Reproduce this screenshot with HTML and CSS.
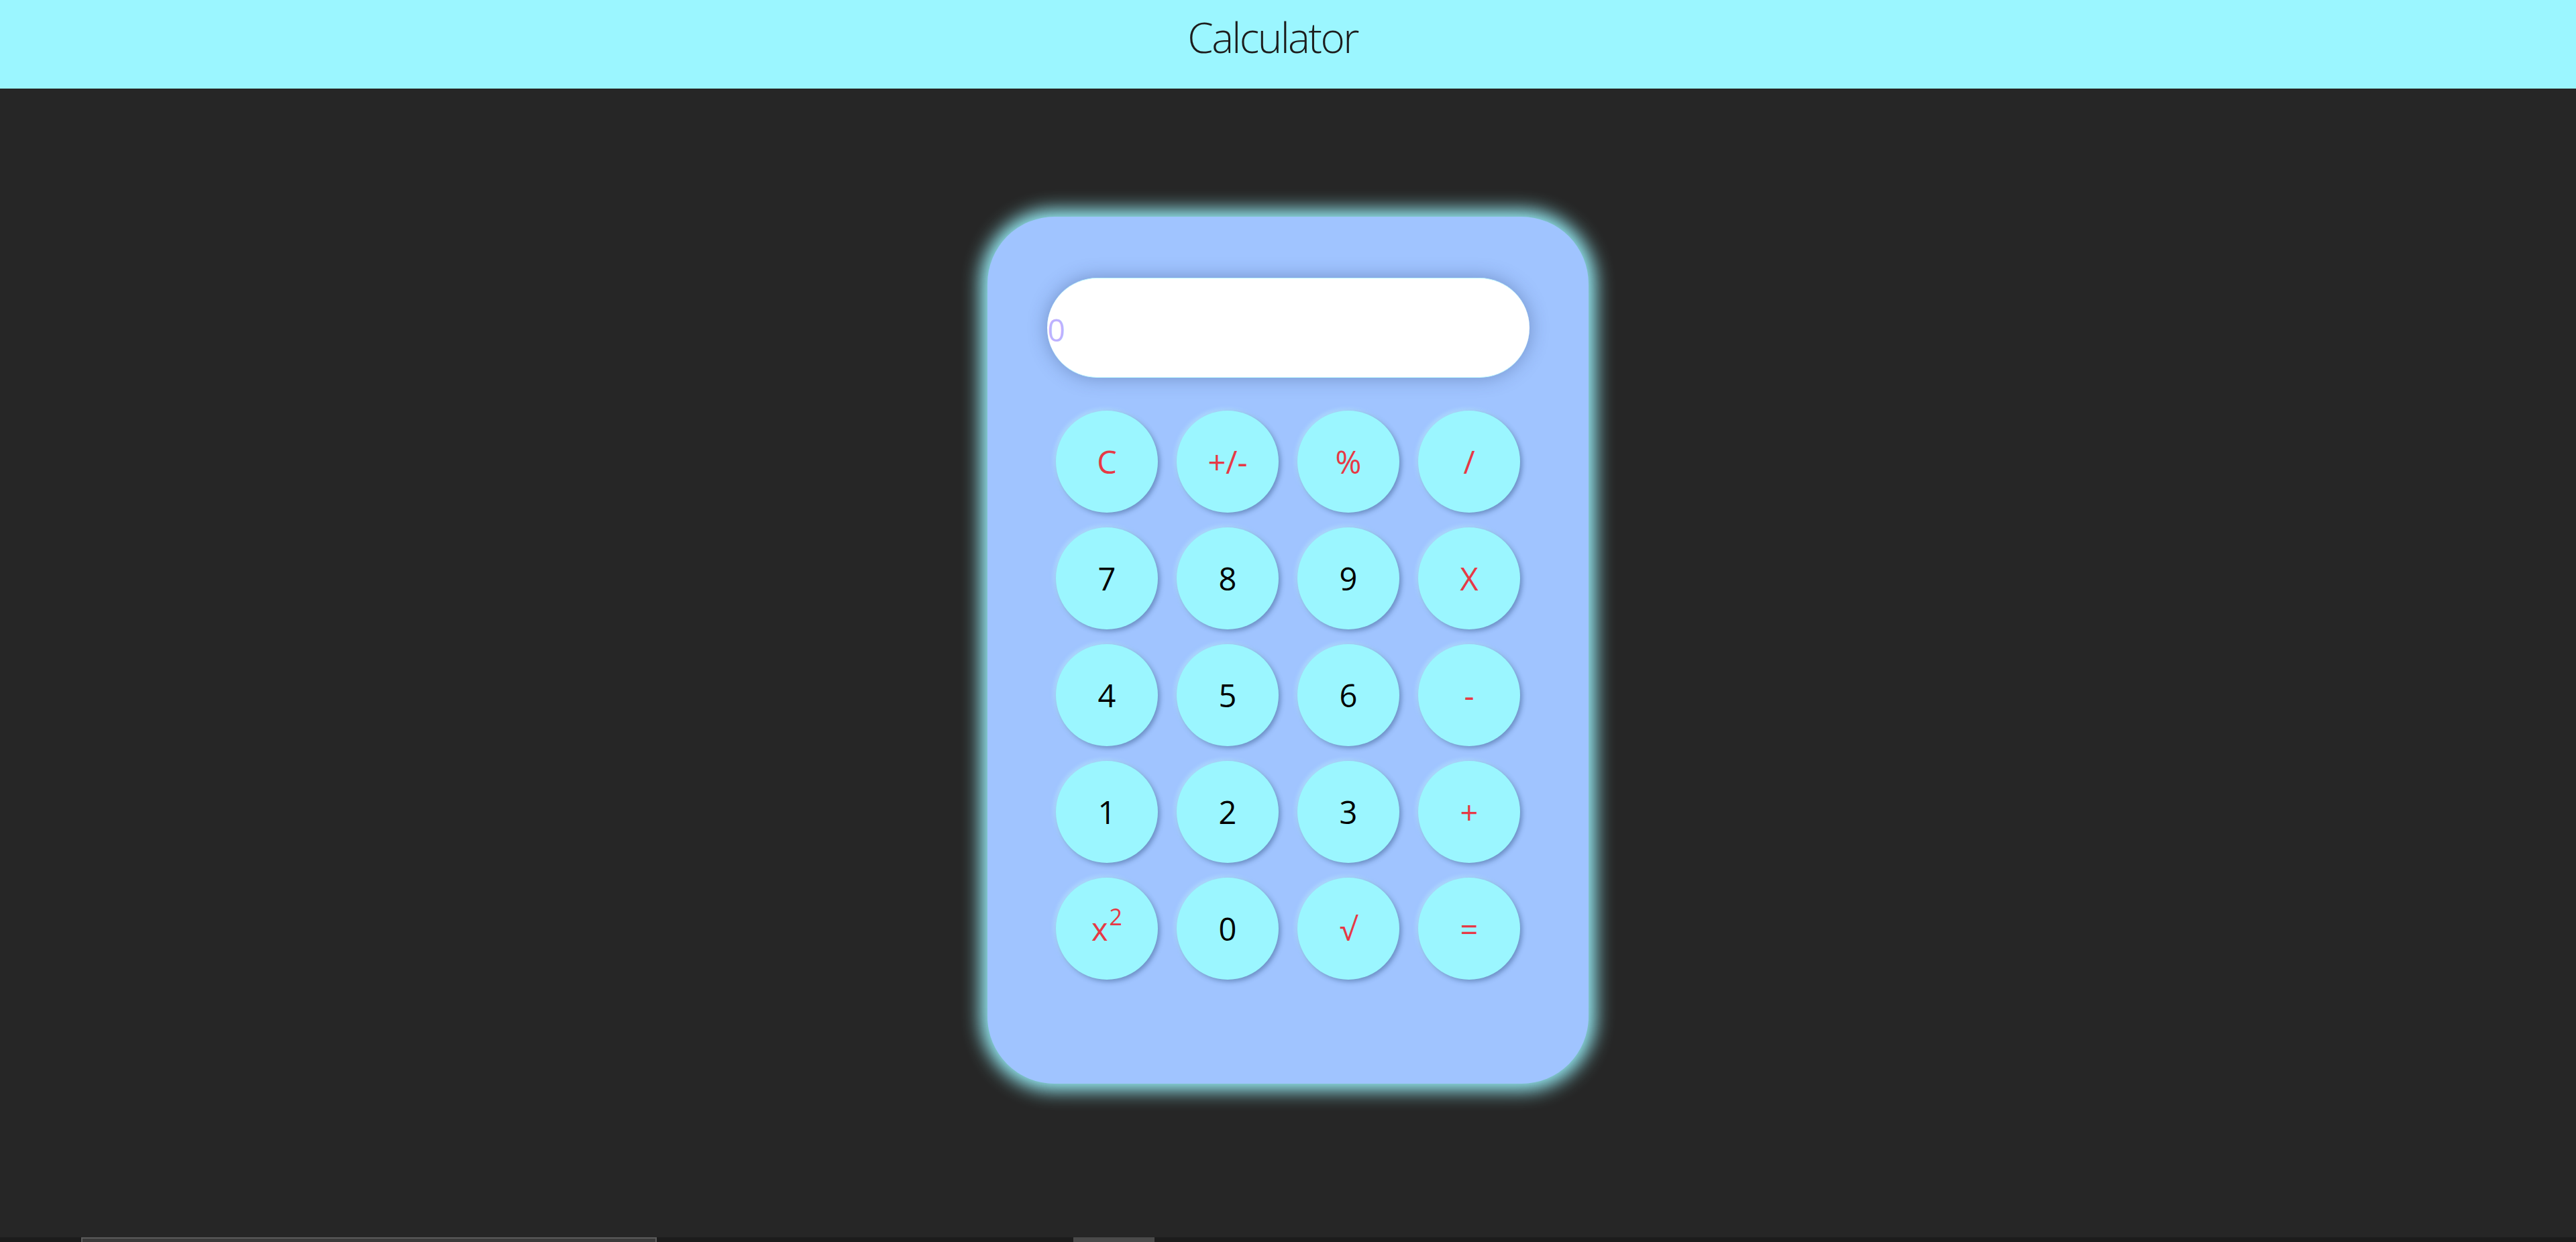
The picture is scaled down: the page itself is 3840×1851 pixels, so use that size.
FILE: index.html
```html
<!DOCTYPE html>
<html lang="en">
<head>
<meta charset="utf-8">
<title>Calculator</title>
<link rel="stylesheet" href="styles.css">
</head>
<body>
<div class="page">
  <header class="topbar"><h1 class="title">Calculator</h1></header>
  <main class="stage">
    <div class="calc">
      <div class="display"><span class="display-value">0</span></div>
      <div class="keys">
        <button class="key op">C</button>
        <button class="key op">+/-</button>
        <button class="key op">%</button>
        <button class="key op">/</button>
        <button class="key">7</button>
        <button class="key">8</button>
        <button class="key">9</button>
        <button class="key op">X</button>
        <button class="key">4</button>
        <button class="key">5</button>
        <button class="key">6</button>
        <button class="key op">-</button>
        <button class="key">1</button>
        <button class="key">2</button>
        <button class="key">3</button>
        <button class="key op">+</button>
        <button class="key op">x<sup class="sq">2</sup></button>
        <button class="key">0</button>
        <button class="key op">√</button>
        <button class="key op">=</button>
      </div>
    </div>
  </main>
  <div class="hscroll">
    <div class="hs-gap1"></div>
    <div class="hs-thumb"></div>
    <div class="hs-gap2"></div>
    <div class="hs-mark"></div>
  </div>
</div>
</body>
</html>
```

FILE: styles.css
```css
* { box-sizing: border-box; }
html, body { margin: 0; padding: 0; }
body {
  background: #262626;
  font-family: "Open Sans", "Noto Sans", "Liberation Sans", sans-serif;
  overflow: hidden;
}
.page {
  display: flex;
  flex-direction: column;
  height: 1851px;
}
.topbar {
  height: 132px;
  flex: none;
  background: #9bf6ff;
  padding: 24px 46px 0 0;
  text-align: center;
}
.title {
  margin: 0;
  font-size: 62px;
  line-height: 1;
  font-weight: 300;
  color: #1d1d1d;
  letter-spacing: -2.6px;
}
.stage {
  flex: 1;
  display: flex;
  justify-content: center;
  align-items: flex-start;
  padding-top: 191px;
}
.calc {
  width: 896px;
  height: 1292px;
  background: #a0c4ff;
  border-radius: 100px;
  box-shadow: 0 0 28px 10px #9bf6ff;
  padding: 91px 88px 0 88px;
  display: flex;
  flex-direction: column;
  align-items: center;
}
.display {
  width: 719px;
  height: 149px;
  flex: none;
  background: #ffffff;
  border-radius: 75px;
  border-top: 1px solid #bff8ff;
  border-bottom: 1px solid #bff8ff;
  box-shadow: 0 0 28px rgba(40, 60, 110, 0.38);
  display: flex;
  align-items: center;
  overflow: hidden;
}
.display-value {
  font-size: 46px;
  color: #bdb2ff;
  padding-left: 1px;
  line-height: 1;
  margin-top: 4px;
}
.keys {
  margin-top: 49px;
  display: grid;
  grid-template-columns: repeat(4, 152px);
  grid-auto-rows: 152px;
  column-gap: 28px;
  row-gap: 22px;
}
.key {
  width: 152px;
  height: 152px;
  border: none;
  border-radius: 50%;
  background: #9bf6ff;
  box-shadow: 3px 3px 7px rgba(40, 70, 120, 0.45), -2px -2px 6px rgba(200, 255, 255, 0.5);
  font-family: "Open Sans", "Noto Sans", "Liberation Sans", sans-serif;
  font-size: 47px;
  color: #000000;
  padding: 0;
  display: flex;
  align-items: center;
  justify-content: center;
  line-height: 1;
}
.key.op { color: #e63946; }
.sq {
  font-size: 34px;
  vertical-align: top;
  position: relative;
  top: -18px;
  margin-left: 2px;
}
.hscroll {
  height: 7px;
  flex: none;
  background: #1c1c1c;
  display: flex;
}
.hs-gap1 { width: 121px; }
.hs-thumb {
  width: 858px;
  background: #3a3a3a;
  border-top: 2px solid #5c5c5c;
  border-left: 2px solid #5c5c5c;
  border-right: 2px solid #5c5c5c;
}
.hs-gap2 { width: 621px; }
.hs-mark { width: 121px; background: #4a4a4a; }
```
